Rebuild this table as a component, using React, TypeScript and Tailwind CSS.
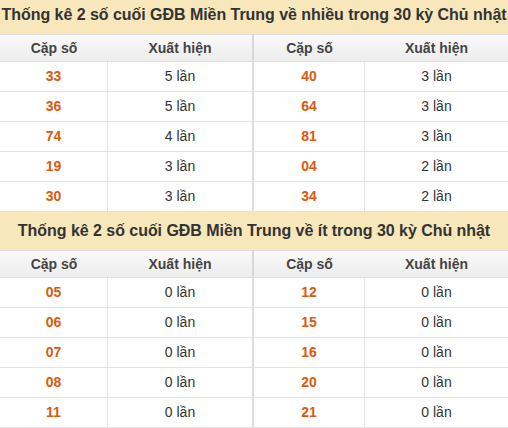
type Pair = { so: string; lan: number };

const nhieu: [Pair, Pair][] = [
  [{ so: '33', lan: 5 }, { so: '40', lan: 3 }],
  [{ so: '36', lan: 5 }, { so: '64', lan: 3 }],
  [{ so: '74', lan: 4 }, { so: '81', lan: 3 }],
  [{ so: '19', lan: 3 }, { so: '04', lan: 2 }],
  [{ so: '30', lan: 3 }, { so: '34', lan: 2 }],
];

const it: [Pair, Pair][] = [
  [{ so: '05', lan: 0 }, { so: '12', lan: 0 }],
  [{ so: '06', lan: 0 }, { so: '15', lan: 0 }],
  [{ so: '07', lan: 0 }, { so: '16', lan: 0 }],
  [{ so: '08', lan: 0 }, { so: '20', lan: 0 }],
  [{ so: '11', lan: 0 }, { so: '21', lan: 0 }],
];

function Half({ pair, left }: { pair: Pair; left: boolean }) {
  return (
    <div className={`flex ${left ? 'w-[254px] border-r-2 border-[#dedede]' : 'flex-1'}`}>
      <div className={`${left ? 'w-[108px]' : 'w-[111px]'} border-r border-[#e3e3e3] flex items-center justify-center font-bold text-[#dc5a0c]`}>
        {pair.so}
      </div>
      <div className="flex-1 flex items-center justify-center text-[#333]">{pair.lan} lần</div>
    </div>
  );
}

function Section({ title, rows }: { title: string; rows: [Pair, Pair][] }) {
  return (
    <div>
      <div className="h-[39px] border-b border-[#dedede] bg-[#f7e7bb] flex items-center justify-center overflow-hidden whitespace-nowrap text-[16px] tracking-[-0.04px] font-bold text-[#333]">
        {title}
      </div>
      <div className="flex h-[27px] border-b border-[#dedede] bg-gradient-to-b from-[#fafafa] to-[#ececec] font-bold text-[#444]">
        {[true, false].map((left) => (
          <div key={String(left)} className={`flex ${left ? 'w-[254px] border-r-2 border-[#d8d8d8]' : 'flex-1'}`}>
            <div className={`${left ? 'w-[108px]' : 'w-[111px]'} flex items-center justify-center`}>Cặp số</div>
            <div className="flex-1 flex items-center justify-center">Xuất hiện</div>
          </div>
        ))}
      </div>
      {rows.map((r, i) => (
        <div key={i} className="flex h-[30px] border-b border-[#e3e3e3] bg-white">
          <Half pair={r[0]} left />
          <Half pair={r[1]} left={false} />
        </div>
      ))}
    </div>
  );
}

export default function App() {
  return (
    <div className="w-[508px] h-[428px] overflow-hidden bg-white">
      <div className="-mt-[4px] text-[14px] font-['Liberation_Sans',Arial,sans-serif]">
        <Section title="Thống kê 2 số cuối GĐB Miền Trung về nhiều trong 30 kỳ Chủ nhật" rows={nhieu} />
        <Section title="Thống kê 2 số cuối GĐB Miền Trung về ít trong 30 kỳ Chủ nhật" rows={it} />
      </div>
    </div>
  );
}
